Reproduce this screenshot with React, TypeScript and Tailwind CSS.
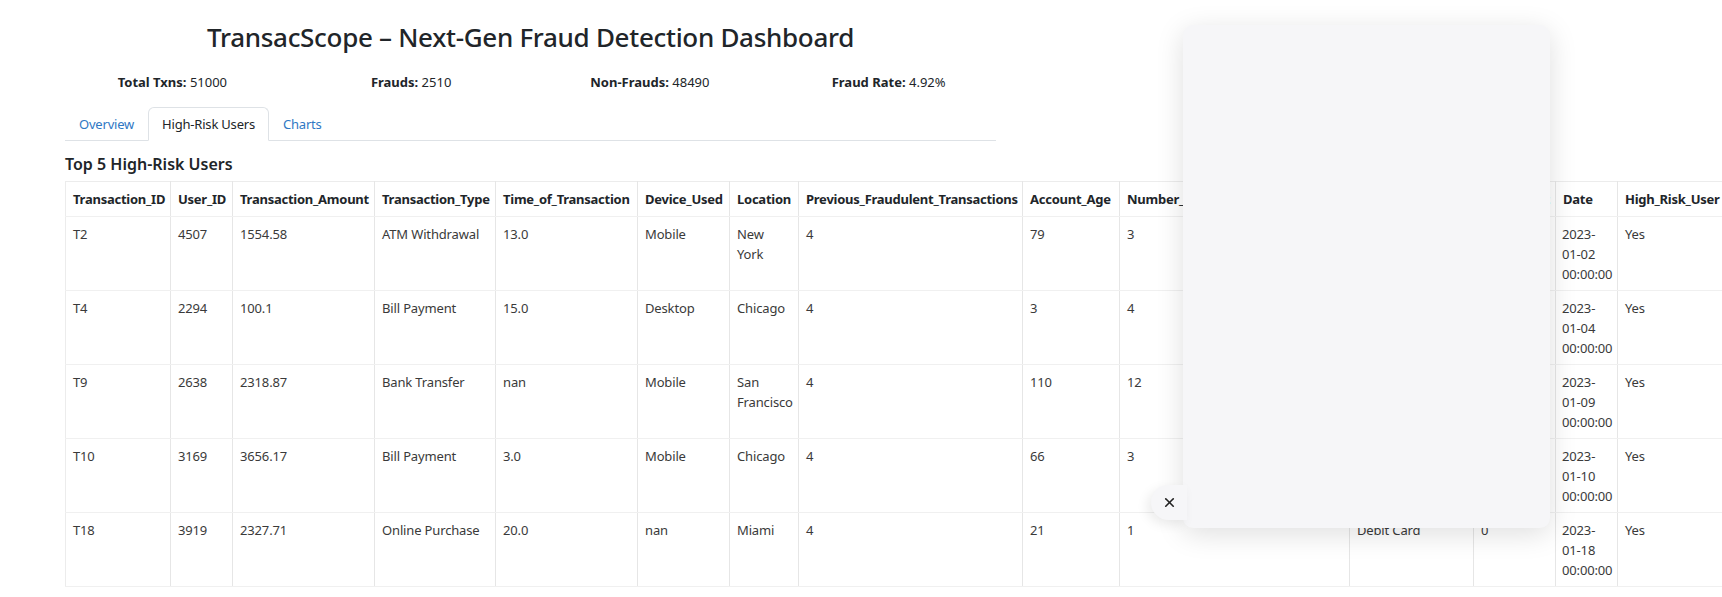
import React from "react";
import { X } from "lucide-react";

// Types
type Row = string[];

const columns: { name: string; width: string }[] = [
  { name: "Transaction_ID", width: "w-[105px]" },
  { name: "User_ID", width: "w-[62px]" },
  { name: "Transaction_Amount", width: "w-[142px]" },
  { name: "Transaction_Type", width: "w-[121px]" },
  { name: "Time_of_Transaction", width: "w-[142px]" },
  { name: "Device_Used", width: "w-[92px]" },
  { name: "Location", width: "w-[69px]" },
  { name: "Previous_Fraudulent_Transactions", width: "w-[224px]" },
  { name: "Account_Age", width: "w-[97px]" },
  { name: "Number_of_Transactions_Last_24H", width: "w-[230px]" },
  { name: "Payment_Method", width: "w-[124px]" },
  { name: "Fraudulent", width: "w-[82px]" },
  { name: "Date", width: "w-[62px]" },
  { name: "High_Risk_User", width: "w-[120px]" },
];

const rows: Row[] = [
  ["T2", "4507", "1554.58", "ATM Withdrawal", "13.0", "Mobile", "New York", "4", "79", "3", "Credit Card", "1", "2023-01-02 00:00:00", "Yes"],
  ["T4", "2294", "100.1", "Bill Payment", "15.0", "Desktop", "Chicago", "4", "3", "4", "UPI", "0", "2023-01-04 00:00:00", "Yes"],
  ["T9", "2638", "2318.87", "Bank Transfer", "nan", "Mobile", "San Francisco", "4", "110", "12", "Net Banking", "0", "2023-01-09 00:00:00", "Yes"],
  ["T10", "3169", "3656.17", "Bill Payment", "3.0", "Mobile", "Chicago", "4", "66", "3", "Debit Card", "1", "2023-01-10 00:00:00", "Yes"],
  ["T18", "3919", "2327.71", "Online Purchase", "20.0", "nan", "Miami", "4", "21", "1", "Debit Card", "0", "2023-01-18 00:00:00", "Yes"],
];

const stats = [
  { label: "Total Txns:", value: "51000" },
  { label: "Frauds:", value: "2510" },
  { label: "Non-Frauds:", value: "48490" },
  { label: "Fraud Rate:", value: "4.92%" },
];

const tabs = ["Overview", "High-Risk Users", "Charts"];

const Tabs = () => (
  <ul className="flex border-b border-[#dee2e6] text-[13px] leading-[20px] tracking-[-0.2px]">
    {tabs.map((t) => {
      const active = t === "High-Risk Users";
      return (
        <li key={t} className="-mb-px">
          <span
            className={
              active
                ? "block rounded-t-[6px] border border-[#dee2e6] border-b-white bg-white px-[13px] py-[6px] text-[#212529]"
                : "block border border-transparent px-[13px] py-[6px] text-[#2f78c4]"
            }
          >
            {t}
          </span>
        </li>
      );
    })}
  </ul>
);

const HighRiskTable = () => (
  <table className="w-[1671px] table-fixed border-collapse border-l border-t border-[#ececec] leading-[20px]">
    <thead>
      <tr>
        {columns.map((c) => (
          <th
            key={c.name}
            className={`${c.width} border-b border-r border-b-[#f0f0f0] border-r-[#e6e6e6] px-[7px] py-[7px] text-left text-[13px] font-bold tracking-[-0.25px] whitespace-nowrap text-[#212529]`}
          >
            {c.name}
          </th>
        ))}
      </tr>
    </thead>
    <tbody>
      {rows.map((r) => (
        <tr key={r[0]}>
          {r.map((v, i) => (
            <td
              key={i}
              className={`border-b border-r border-b-[#f0f0f0] border-r-[#e6e6e6] pt-[7px] pb-[6px] align-top text-[13px] tracking-[-0.15px] text-[#3a3a3a] ${
                i === 12 ? "px-[6px]" : "px-[7px]"
              }`}
            >
              {v}
            </td>
          ))}
        </tr>
      ))}
    </tbody>
  </table>
);

export default function App() {
  return (
    <div
      className="relative h-[597px] w-full overflow-hidden bg-white text-[#212529]"
      style={{ fontFamily: '"Noto Sans", "Open Sans", sans-serif' }}
    >
      <div className="ml-[65px] w-[931px] pt-[20px]">
        <h1 className="text-center text-[26px] leading-[34px] font-medium tracking-[-0.3px]">
          TransacScope – Next-Gen Fraud Detection Dashboard
        </h1>

        <div className="mx-[-12px] mt-[18px] grid grid-cols-4 text-[13px] leading-[20px]">
          {stats.map((s) => (
            <div key={s.label} className="text-center">
              <span className="font-bold">{s.label}</span> {s.value}
            </div>
          ))}
        </div>

        <div className="mt-[15px]">
          <Tabs />
        </div>

        <h5 className="mt-[11px] text-[16px] leading-[24px] font-semibold">Top 5 High-Risk Users</h5>

        <div className="mt-[5px]">
          <HighRiskTable />
        </div>
      </div>

      {/* side drawer overlay */}
      <div className="absolute left-[1183px] top-[25px] h-[503px] w-[367px] rounded-[10px] bg-[#f6f6f8] shadow-[0_6px_28px_rgba(0,0,0,0.13)]" />
      <button className="absolute left-[1151px] top-[485px] flex h-[35px] w-[36px] items-center justify-center rounded-l-full bg-[#f6f6f8] shadow-[-4px_4px_12px_rgba(0,0,0,0.08)]">
        <X size={15} strokeWidth={2.6} className="text-[#222]" />
      </button>
    </div>
  );
}
